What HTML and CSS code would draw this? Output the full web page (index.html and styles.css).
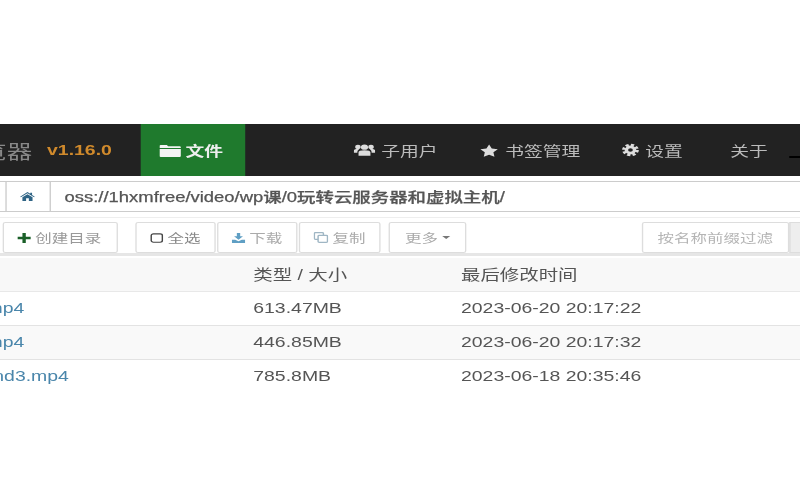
FILE: index.html
```html
<!DOCTYPE html>
<html lang="zh">
<head>
<meta charset="utf-8">
<title>OSS 浏览器</title>
<link rel="stylesheet" href="styles.css">
</head>
<body>
<div class="page">
  <nav class="navbar">
    <div class="brand"><span class="brand-name">览器</span><span class="version">v1.16.0</span></div>
    <a class="nav-item active"><svg class="ic ic-folder" viewBox="0 0 16 13"><path d="M0 2a1 1 0 0 1 1-1h4.500l1 1.200H15a1 1 0 0 1 1 1V4H0zM0 5h16v7a1 1 0 0 1-1 1H1a1 1 0 0 1-1-1z"/></svg>文件</a>
    <div class="nav-right">
      <a class="nav-item"><svg class="ic ic-users" viewBox="0 0 18 14"><circle cx="9" cy="3.800" r="3"/><circle cx="3.500" cy="3.500" r="2.300"/><circle cx="14.500" cy="3.500" r="2.300"/><path d="M4 13.500V9.500C4 8 5.500 7.200 9 7.200s5 .8 5 2.300v4zM0 10V8c0-1.500 1-2 3.500-2 .5 0 .8 0 1 .1C3.500 7 3 8 3 10zM18 10V8c0-1.500-1-2-3.500-2-.5 0-.8 0-1 .1 1 .9 1.500 1.900 1.500 3.900z"/></svg>子用户</a>
      <a class="nav-item"><svg class="ic" viewBox="0 0 16 15"><path d="M8 .5l2.300 4.800 5.200.7-3.800 3.600.9 5.200L8 12.300l-4.600 2.500.9-5.200L.5 6l5.200-.7z"/></svg>书签管理</a>
      <a class="nav-item"><svg class="ic ic-gear" viewBox="0 0 16 16"><circle class="gear-teeth" cx="8" cy="8" r="6.200"/><circle class="gear-ring" cx="8" cy="8" r="3.800"/></svg>设置</a>
      <a class="nav-item about">关于</a>
    </div>
    <span class="nav-glitch"></span>
  </nav>

  <div class="path-bar">
    <span class="path-edge"></span>
    <span class="path-home"><svg class="ic-home" viewBox="0 0 16 13"><path d="M8 0l3 2.500V1h2v3.200L16 6.800l-.8.9L8 1.800.8 7.700 0 6.800zM2.500 7.700L8 3.200l5.500 4.500V13H9.500V9h-3v4h-4z"/></svg></span>
    <span class="path-text">oss://1hxmfree/video/wp课/0玩转云服务器和虚拟主机/</span>
  </div>

  <div class="toolbar">
    <button class="btn btn-create"><svg class="tb-ic plus" viewBox="0 0 12 12"><path d="M4.500 0h3v4.500H12v3H7.500V12h-3V7.500H0v-3h4.500z"/></svg>创建目录</button>
    <div class="btn-group">
      <button class="btn btn-dark"><svg class="tb-ic" viewBox="0 0 12 12"><rect class="outline" x="1" y="1" width="10" height="10" rx="2"/></svg>全选</button>
      <button class="btn"><svg class="tb-ic blue" viewBox="0 0 12 12"><path d="M4.500 0h3v4H10L6 8 2 4h2.500zM0 8h3l3 2 3-2h3v4H0z"/></svg>下载</button>
      <button class="btn"><svg class="tb-ic sky" viewBox="0 0 13 13"><rect class="outline" x=".7" y=".7" width="8" height="8" rx="1"/><rect class="outline filled" x="4" y="4" width="8.300" height="8.300" rx="1"/></svg>复制</button>
    </div>
    <button class="btn btn-more">更多<span class="caret"></span></button>
    <div class="filter">
      <span class="filter-input">按名称前缀过滤</span>
      <span class="filter-addon"></span>
    </div>
  </div>

  <div class="table">
    <div class="row head"><span class="cell-name"></span><span class="cell-size">类型 / 大小</span><span>最后修改时间</span></div>
    <div class="row"><span class="cell-name"><a class="name">mp4</a></span><span class="cell-size">613.47MB</span><span>2023-06-20 20:17:22</span></div>
    <div class="row odd"><span class="cell-name"><a class="name">mp4</a></span><span class="cell-size">446.85MB</span><span>2023-06-20 20:17:32</span></div>
    <div class="row last"><span class="cell-name"><a class="name name-long">nd3.mp4</a></span><span class="cell-size">785.8MB</span><span>2023-06-18 20:35:46</span></div>
  </div>
</div>
</body>
</html>
```

FILE: styles.css
```css
html, body {
  margin: 0;
  height: 100%;
  overflow: hidden;
  background: #fff;
}

.page {
  width: 598px;
  padding-top: 124px;
  transform: scaleX(1.34);
  transform-origin: 0 0;
  filter: blur(0.5px);
  font-family: "Liberation Sans", "Noto Sans CJK SC", sans-serif;
  font-size: 14.5px;
  color: #555;
}

.navbar {
  position: relative;
  display: flex;
  align-items: stretch;
  height: 52px;
  background: #222;
  color: #bbb;
}

.brand {
  width: 104.5px;
  display: flex;
  align-items: center;
  justify-content: flex-end;
  overflow: hidden;
  white-space: nowrap;
  padding-right: 21px;
  box-sizing: border-box;
  gap: 11px;
}

.brand-name {
  font-size: 19px;
  color: #888;
  flex: none;
}

.version {
  font-weight: 700;
  color: #d08a2c;
  flex: none;
}

.nav-item {
  display: flex;
  align-items: center;
  font-size: 14px;
  color: #bbb;
  padding: 0 15.5px;
}

.nav-item.active {
  width: 78px;
  box-sizing: border-box;
  background: #1f7a2d;
  color: #eee;
  font-weight: 700;
  padding: 0 0 0 14px;
}

.nav-right {
  display: flex;
  margin-left: 65.5px;
}

.about {
  padding-left: 20px;
}

.ic {
  width: 14px;
  height: 13px;
  margin-right: 5.5px;
  fill: #ddd;
}

.ic-folder {
  width: 16px;
  height: 13px;
  margin-right: 4px;
  fill: #f4f4f4;
}

.ic-users {
  width: 16px;
  height: 14px;
  margin-right: 5px;
}

.ic-gear {
  width: 13px;
  height: 14px;
  margin-right: 4.5px;
}

.gear-teeth {
  fill: none;
  stroke: #ddd;
  stroke-width: 3;
  stroke-dasharray: 2.900 2;
}

.gear-ring {
  fill: none;
  stroke: #ddd;
  stroke-width: 3.200;
}

.nav-glitch {
  position: absolute;
  right: 0;
  top: 32px;
  width: 9px;
  height: 2px;
  background: #000;
}

.path-bar {
  display: flex;
  align-items: stretch;
  height: 31px;
  margin-top: 5px;
  border-top: 1px solid #ccc;
  border-bottom: 1px solid #ccc;
  box-sizing: border-box;
}

.path-edge {
  width: 3.700px;
  border-right: 1px solid #ccc;
}

.path-home {
  width: 32px;
  display: flex;
  align-items: center;
  justify-content: center;
  border-right: 1px solid #ccc;
}

.ic-home {
  width: 11px;
  height: 11px;
  fill: #2f6485;
}

.path-text {
  display: flex;
  align-items: center;
  padding: 0 0 2px 10.5px;
  font-size: 13.75px;
  font-weight: 500;
  color: #555;
  white-space: nowrap;
  -webkit-text-stroke: 0.25px #555;
}

.toolbar {
  display: flex;
  align-items: stretch;
  height: 31px;
  margin-top: 5px;
  padding: 4px 0 0 1.500px;
  border-top: 1px solid #eee;
  border-bottom: 3px solid #e6e6e6;
  margin-bottom: 2px;
}

.btn {
  display: flex;
  align-items: center;
  justify-content: center;
  height: 31px;
  padding: 0;
  box-sizing: border-box;
  background: #fff;
  border: 1px solid #ddd;
  border-radius: 2px;
  font-family: inherit;
  font-size: 12.300px;
  color: #aaa;
}

.btn-create {
  width: 86px;
  color: #999;
}

.btn-group {
  display: flex;
  gap: 1.500px;
  margin-left: 13.500px;
}

.btn-group .btn {
  width: 59.500px;
}

.btn-group .btn:last-child {
  width: 61px;
}

.btn-dark {
  color: #888;
}

.btn-more {
  width: 58px;
  margin-left: 6px;
}

.tb-ic {
  width: 10px;
  height: 10px;
  margin-right: 3px;
  fill: currentColor;
}

.plus {
  fill: #1a5f28;
}

.blue {
  fill: #5f9fc4;
}

.sky {
  width: 11px;
  height: 11px;
}

.outline {
  fill: none;
  stroke: #444;
  stroke-width: 1.300;
}

.sky .outline {
  stroke: #9fb6c4;
}

.sky .filled {
  fill: #fff;
}

.caret {
  margin-left: 3px;
  border: 3.500px solid transparent;
  border-top-color: #777;
  border-bottom: 0;
}

.filter {
  display: flex;
  margin-left: 130.500px;
  flex: 1;
}

.filter-input {
  display: flex;
  align-items: center;
  justify-content: center;
  width: 110.500px;
  height: 31px;
  box-sizing: border-box;
  border: 1px solid #ddd;
  border-radius: 2px;
  font-size: 12.300px;
  color: #b5b5b5;
}

.filter-addon {
  flex: 1;
  height: 31px;
  background: #eee;
  border: 1px solid #ddd;
  box-sizing: border-box;
}

.row {
  display: flex;
  align-items: center;
  height: 34px;
  padding-bottom: 2px;
  box-sizing: border-box;
  border-bottom: 1px solid #e3e3e3;
  white-space: nowrap;
}

.row.head {
  height: 34px;
  background: #f8f8f8;
  color: #555;
  border-bottom-color: #e8e8e8;
}

.row.odd {
  background: #f9f9f9;
}

.row.last {
  border-bottom: 0;
}

.cell-name {
  width: 189px;
  flex: none;
}

.cell-size {
  width: 155px;
  flex: none;
}

.name {
  display: block;
  margin-left: -10px;
  color: #4a86ab;
}

.name-long {
  margin-left: -5px;
}
```
